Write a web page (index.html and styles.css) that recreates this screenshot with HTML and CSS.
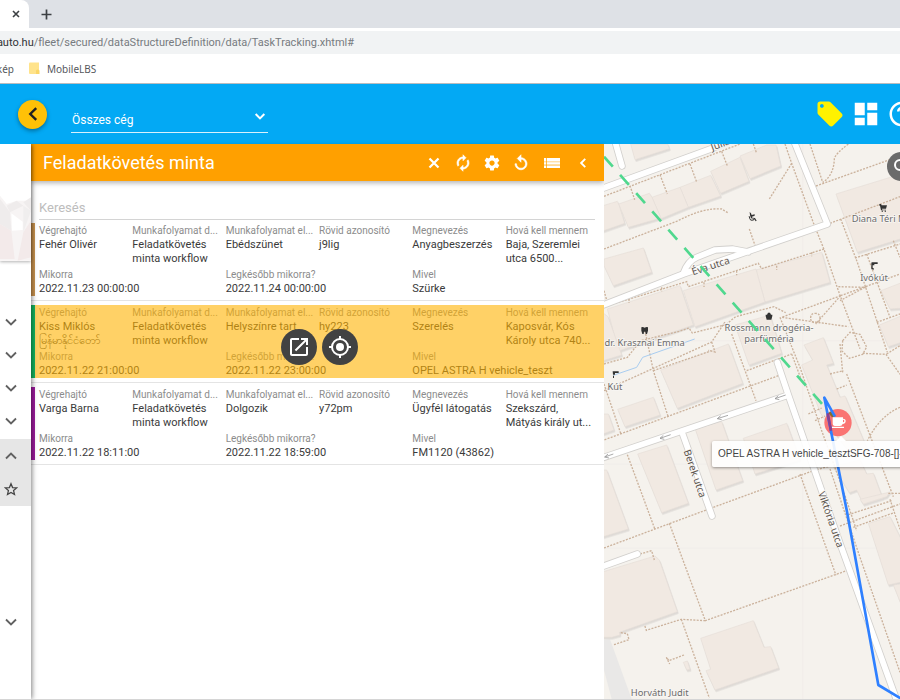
FILE: index.html
```html
<!DOCTYPE html>
<html lang="hu">
<head>
<meta charset="utf-8">
<title>Feladatkövetés minta</title>
<link rel="stylesheet" href="styles.css">
</head>
<body>
<div class="tabstrip">
  <div class="tab"><button class="tab-button" aria-label="Lap bezárása"><svg width="8" height="8" viewBox="0 0 8 8"><path d="M1 1l6 6M7 1L1 7" stroke="#3c4043" stroke-width="1.6"/></svg></button></div>
  <button class="tab-button new-tab" aria-label="Új lap"><svg width="11" height="11" viewBox="0 0 11 11"><path d="M5.5 0.5v10M0.500 5.500h10" stroke="#3c4043" stroke-width="1.7"/></svg></button>
</div>
<div class="address"><div class="url"><span class="host">auto.hu</span>/fleet/secured/dataStructureDefinition/data/TaskTracking.xhtml#</div></div>
<nav class="bookmarks">
  <a class="clipped" href="#">kép</a>
  <a class="bookmark" href="#"><svg width="11" height="13" viewBox="0 0 11 13"><path d="M1 .5h9v11.500H1q-1 0-1-1V1.500q0-1 1-1z" fill="#ffe38b"/><path d="M7 12V8.500q1.500-2 3.500 0V12z" fill="#fbd667"/></svg>MobileLBS</a>
</nav>

<header class="topbar">
  <button class="back" aria-label="Vissza"><svg width="22" height="22" viewBox="0 0 24 24"><path d="M15.500 5.500L9 12l6.500 6.500" fill="none" stroke="#222" stroke-width="2.600"/></svg></button>
  <div class="company">
    <select aria-label="Cég"><option>Összes cég</option></select>
    <svg class="caret" width="16" height="16" viewBox="0 0 24 24"><path d="M5.500 9L12 15.500 18.500 9" fill="none" stroke="#fff" stroke-width="3"/></svg>
  </div>
  <div class="top-actions">
    <button aria-label="Címkék"><svg width="30" height="30" viewBox="0 0 24 24"><path fill="#fff200" d="M21.410 11.580l-9-9C12.050 2.220 11.550 2 11 2H4c-1.100 0-2 .900-2 2v7c0 .550.220 1.050.590 1.420l9 9c.360.360.860.580 1.410.580s1.050-.220 1.410-.590l7-7c.370-.360.590-.860.590-1.410s-.230-1.060-.590-1.420zM5.500 7C4.670 7 4 6.330 4 5.500S4.670 4 5.500 4 7 4.670 7 5.500 6.330 7 5.500 7z"/></svg></button>
    <button aria-label="Irányítópult"><svg width="30" height="30" viewBox="0 0 24 24"><path fill="#fff" d="M3 13h8V3H3v10zm0 8h8v-6H3v6zm10 0h8V11h-8v10zm0-18v6h8V3h-8z"/></svg></button>
    <button aria-label="Súgó"><svg width="30" height="30" viewBox="0 0 24 24"><path fill="#fff" d="M11 18h2v-2h-2v2zm1-16C6.480 2 2 6.480 2 12s4.480 10 10 10 10-4.480 10-10S17.520 2 12 2zm0 18c-4.410 0-8-3.590-8-8s3.590-8 8-8 8 3.590 8 8-3.590 8-8 8zm0-14c-2.210 0-4 1.790-4 4h2c0-1.100.900-2 2-2s2 .900 2 2c0 2-3 1.750-3 5h2c0-2.250 3-2.500 3-5 0-2.210-1.790-4-4-4z"/></svg></button>
  </div>
</header>

<div class="workspace">
  <aside class="rail">
    <div class="cover"><svg width="31" height="117" viewBox="0 0 93 351"><path fill="#f7f4f4" d="M0 155l20 25 30-10h43v180H0z"/><path fill="#efecec" d="M0 165l30 40 4 55-34-20zM20 185l30-15 20 15-40 20zM70 175l23-15v40z"/><path fill="#f3eaea" d="M0 240l34 20 10 85H0zM70 265l23-35v110l-40 10z"/><path fill="#ffffff" d="M34 208l34 25v25l-32 2z"/><path fill="#f0eeee" d="M70 185l23 15-23 65z"/></svg></div>
    <div class="rail-list">
      <button aria-label="Kinyitás"><svg width="20" height="20" viewBox="0 0 24 24"><path class="chev" d="M6 9l6 6 6-6"/></svg></button>
      <button aria-label="Kinyitás"><svg width="20" height="20" viewBox="0 0 24 24"><path class="chev" d="M6 9l6 6 6-6"/></svg></button>
      <button aria-label="Kinyitás"><svg width="20" height="20" viewBox="0 0 24 24"><path class="chev" d="M6 9l6 6 6-6"/></svg></button>
      <button aria-label="Kinyitás"><svg width="20" height="20" viewBox="0 0 24 24"><path class="chev" d="M6 9l6 6 6-6"/></svg></button>
      <div class="rail-open">
        <button aria-label="Becsukás"><svg width="20" height="20" viewBox="0 0 24 24"><path class="chev" d="M6 15l6-6 6 6"/></svg></button>
        <button aria-label="Kedvenc"><svg width="14" height="14" viewBox="0 0 24 24"><path d="M12 3l2.700 6.500 7 .600-5.300 4.600 1.600 6.800-6-3.600-6 3.600 1.600-6.800L2.300 10.100l7-.600z" fill="none" stroke="#444" stroke-width="2.200"/></svg></button>
      </div>
      <div class="rail-gap"></div>
      <button aria-label="Kinyitás"><svg width="20" height="20" viewBox="0 0 24 24"><path class="chev" d="M6 9l6 6 6-6"/></svg></button>
    </div>
  </aside>

  <main class="panel">
    <div class="panel-head">
      <h1>Feladatkövetés minta</h1>
      <button aria-label="Bezárás"><svg width="18" height="18" viewBox="0 0 24 24"><path d="M6 6l12 12M18 6L6 18" stroke="#fff" stroke-width="3"/></svg></button>
      <button aria-label="Frissítés"><svg width="18" height="18" viewBox="0 0 24 24"><path fill="#fff" stroke="#fff" stroke-width=".8" d="M12 6v3l4-4-4-4v3c-4.420 0-8 3.580-8 8 0 1.570.460 3.030 1.240 4.260L6.700 14.800c-.450-.830-.700-1.790-.700-2.800 0-3.310 2.690-6 6-6zm6.760 1.740L17.300 9.200c.440.840.700 1.790.700 2.800 0 3.310-2.690 6-6 6v-3l-4 4 4 4v-3c4.420 0 8-3.580 8-8 0-1.570-.460-3.030-1.240-4.260z"/></svg></button>
      <button aria-label="Beállítások"><svg width="18" height="18" viewBox="0 0 24 24"><path fill="#fff" d="M19.430 12.980c.040-.320.070-.640.070-.980s-.030-.660-.070-.980l2.110-1.650c.190-.150.240-.420.120-.640l-2-3.460c-.120-.220-.390-.300-.610-.220l-2.490 1c-.520-.400-1.080-.730-1.690-.980l-.380-2.650C14.460 2.180 14.250 2 14 2h-4c-.250 0-.460.180-.490.420l-.380 2.650c-.610.250-1.170.590-1.690.980l-2.490-1c-.230-.090-.490 0-.610.220l-2 3.460c-.130.220-.070.490.120.640l2.110 1.650c-.040.320-.070.650-.070.980s.030.660.070.980l-2.110 1.650c-.190.150-.240.420-.120.640l2 3.460c.120.220.390.300.610.220l2.490-1c.520.400 1.080.730 1.690.980l.380 2.650c.030.240.240.420.490.420h4c.250 0 .460-.180.490-.420l.380-2.650c.610-.250 1.170-.590 1.690-.980l2.490 1c.230.090.490 0 .610-.220l2-3.460c.120-.220.070-.490-.120-.640l-2.110-1.650zM12 15.500c-1.930 0-3.500-1.570-3.500-3.500s1.570-3.500 3.500-3.500 3.500 1.570 3.500 3.500-1.570 3.500-3.500 3.500z"/></svg></button>
      <button aria-label="Visszaállítás"><svg width="18" height="18" viewBox="0 0 24 24"><path fill="#fff" stroke="#fff" stroke-width=".8" d="M12 5V1L7 6l5 5V7c3.310 0 6 2.690 6 6s-2.690 6-6 6-6-2.690-6-6H4c0 4.420 3.580 8 8 8s8-3.580 8-8-3.580-8-8-8z"/></svg></button>
      <button aria-label="Lista"><svg width="22" height="18" viewBox="0 0 22 18"><path fill="#fff" d="M3 4h16v3H3zM3 11.500h16V14H3z"/><path fill="#ffe0a8" d="M3 7h16v4.500H3z"/><path stroke="#fff" stroke-width="1.500" d="M3 9.200h16"/><path stroke="#ffa000" stroke-width=".7" d="M5.500 4v10"/></svg></button>
      <button aria-label="Összecsukás"><svg width="18" height="18" viewBox="0 0 24 24"><path d="M15 6.500L9.500 12l5.500 5.500" fill="none" stroke="#fff" stroke-width="2.500"/></svg></button>
    </div>
    <input class="search" type="text" placeholder="Keresés" aria-label="Keresés">

    <article class="task tan">
      <dl>
        <div><dt>Végrehajtó</dt><dd>Fehér Olivér</dd></div>
        <div><dt>Munkafolyamat d...</dt><dd>Feladatkövetés<br>minta workflow</dd></div>
        <div><dt>Munkafolyamat el...</dt><dd>Ebédszünet</dd></div>
        <div><dt>Rövid azonosító</dt><dd>j9lig</dd></div>
        <div><dt>Megnevezés</dt><dd>Anyagbeszerzés</dd></div>
        <div><dt>Hová kell mennem</dt><dd>Baja, Szeremlei<br>utca 6500...</dd></div>
        <div class="wide"><dt>Mikorra</dt><dd>2022.11.23 00:00:00</dd></div>
        <div class="wide"><dt>Legkésőbb mikorra?</dt><dd>2022.11.24 00:00:00</dd></div>
        <div class="wide"><dt>Mivel</dt><dd>Szürke</dd></div>
      </dl>
    </article>
    <article class="task green">
      <dl>
        <div><dt>Végrehajtó</dt><dd>Kiss Miklós<br>မြန်မာနိုင်ငံတော်</dd></div>
        <div><dt>Munkafolyamat d...</dt><dd>Feladatkövetés<br>minta workflow</dd></div>
        <div><dt>Munkafolyamat el...</dt><dd>Helyszínre tart</dd></div>
        <div><dt>Rövid azonosító</dt><dd>hy223</dd></div>
        <div><dt>Megnevezés</dt><dd>Szerelés</dd></div>
        <div><dt>Hová kell mennem</dt><dd>Kaposvár, Kós<br>Károly utca 740...</dd></div>
        <div class="wide"><dt>Mikorra</dt><dd>2022.11.22 21:00:00</dd></div>
        <div class="wide"><dt>Legkésőbb mikorra?</dt><dd>2022.11.22 23:00:00</dd></div>
        <div class="wide"><dt>Mivel</dt><dd>OPEL ASTRA H vehicle_teszt</dd></div>
      </dl>
      <div class="hover-actions">
        <button aria-label="Megnyitás"><svg width="24" height="24" viewBox="0 0 24 24"><path fill="#fff" d="M19 19H5V5h7V3H5c-1.110 0-2 .900-2 2v14c0 1.100.890 2 2 2h14c1.100 0 2-.900 2-2v-7h-2v7zM14 3v2h3.590l-9.830 9.830 1.410 1.410L19 6.410V10h2V3h-7z"/></svg></button>
        <button aria-label="Mutatás a térképen"><svg width="24" height="24" viewBox="0 0 24 24"><circle cx="12" cy="12" r="4" fill="#fff"/><circle cx="12" cy="12" r="8" fill="none" stroke="#fff" stroke-width="2"/><path d="M12 1v3M12 20v3M1 12h3M20 12h3" stroke="#fff" stroke-width="2"/></svg></button>
      </div>
    </article>
    <article class="task purple">
      <dl>
        <div><dt>Végrehajtó</dt><dd>Varga Barna</dd></div>
        <div><dt>Munkafolyamat d...</dt><dd>Feladatkövetés<br>minta workflow</dd></div>
        <div><dt>Munkafolyamat el...</dt><dd>Dolgozik</dd></div>
        <div><dt>Rövid azonosító</dt><dd>y72pm</dd></div>
        <div><dt>Megnevezés</dt><dd>Ügyfél látogatás</dd></div>
        <div><dt>Hová kell mennem</dt><dd>Szekszárd,<br>Mátyás király ut...</dd></div>
        <div class="wide"><dt>Mikorra</dt><dd>2022.11.22 18:11:00</dd></div>
        <div class="wide"><dt>Legkésőbb mikorra?</dt><dd>2022.11.22 18:59:00</dd></div>
        <div class="wide"><dt>Mivel</dt><dd>FM1120 (43862)</dd></div>
      </dl>
    </article>
  </main>

  <section class="map" aria-label="Térkép">
    <svg class="map-canvas" viewBox="12 0 888 1665" preserveAspectRatio="xMinYMin slice">
      <rect x="0" y="0" width="900" height="1670" fill="#f5f2ed"/>
      <path class="grid" d="M608 0V1670M12 468H0M12 590H900M12 960H900M12 1212H900"/>
      <path fill="#e9e8e7" d="M12 1488l18-2 65 179H35L12 1578z"/>
      <g class="buildings">
        <path d="M92 0l13 47 103-33-5-14z"/>
        <path d="M420 36l80-33h28l14 63-92 38z"/>
        <path d="M332 82l88-42 27 72-85 36z"/>
        <path d="M240 130l92-36 30 62-97 34z"/>
        <path d="M156 160l84-30 25 60-82 34z"/>
        <path d="M56 180l92-32 8 12 27 62-98 28z"/>
        <path d="M0 188l52-16 6 14 16 52-74 26z"/>
        <path d="M12 345l118-33 25 73-115 40-28-60z"/>
        <path d="M468 378l197-53 25 90-195 59z"/>
        <path d="M250 440l218-65 27 99-210 74z"/>
        <path d="M22 495l218-70 40 118-224 78z"/>
        <path d="M0 500l24 18 41 115-65 20z"/>
        <path d="M708 150l202-62v194l-138 43z"/>
        <path d="M843 440l67-26v78l-40 3z"/>
        <path d="M405 543l105-30 35 115-98 35z"/>
        <path d="M182 678l203-78 43 118-196 75z"/>
        <path d="M612 603l58-22 30 77-20 5 40 97 15-4 68 162-43 22-70-92-28-40-57-145 33-15z"/>
        <path d="M53 796l107-36 20 53-105 35z"/>
        <path d="M0 810l25 0 17 48-42 15z"/>
        <path d="M113 930l87-27 65 175-80 28z"/>
        <path d="M285 853l80-20 63 177-80 28z"/>
        <path d="M0 978l20 0 65 177-85 26z"/>
        <path d="M430 883l130-45 40 110-135 42z"/>
        <path d="M700 968l80-20 20 42 20-2 28 75-58 18-20-43-22 8z"/>
        <path d="M838 543l72-30v80l-45 15z"/>
        <path d="M0 1286l165-50 13 12 54 155-174 62 2 8-25 7-35 0z"/>
        <path d="M302 1483l158-53 32 80 20-2 24 64-191 66-27-58 14-4z"/>
        <path d="M780 1066l10 14 70-22 10-14z"/>
        <path d="M805 1138l65-20 40 80v115l-45 10z"/>
        <path d="M880 1323l30-5v80z"/>
        <path d="M250 1555l12-4 8 25-10 2z"/>
      </g>
      <g class="paths">
        <path d="M12 157L420 0M90 125l14 42M180 92l22 58M270 60l20 54M365 22l18 46M460 0l10 28"/>
        <path d="M12 315L230 232Q310 190 365 195L385 207"/>
        <path d="M555 0l20 58 65 178 32 80 48 138 60 160M575 58L508 165M630 0l38 115M745 0q-40 30-42 45-2 50-35 70"/>
        <path d="M648 126L900 36M690 238L900 158"/>
        <path d="M448 255l18 52M672 315L485 374l-10-16L265 428l-5-15L12 488M530 365v12M410 380v14M312 415v14M185 430v12M87 465v12M635 325v12"/>
        <path d="M722 225l50 130 60 180 30 90M765 342L900 300M880 290l20 50M800 330L870 520M722 455L900 390M722 455L545 520 745 548M715 428l80 2-75 40M722 455l-75 85M830 535L900 510"/>
        <path d="M12 440l8 28M632 522q0-14 14-14t14 14-14 14-14-14"/>
        <path d="M12 660l70-20 40-50 115-28 30-10 10 15 100-25 30-24 115-30 35 18M135 560l25 120 45 140M12 740L335 594l40-60M160 680l175-60M335 594l10 30-20-5M395 570l73 200M535 695L12 888M440 680l135-50M12 720l50 148"/>
        <path d="M540 520l60 150 65 190 65 180 40 120M575 630l30 80M625 810l40-18M645 830l30-14M690 690l40-10M710 735l30-12M720 600l8 85"/>
        <path d="M728 590l22-25 30 6 20 38-12 22-40 12-22-22zM788 628l70 3 42 60M860 630l40-25M740 690L880 1058M900 790q-60 25-98 100M865 1048h35"/>
        <path d="M82 932l82 222M12 1212L340 1090 640 980 690 966M208 1138l108 292L740 1280M316 1430l-72-4-105 33-5-15M244 1426l84 236M120 1230l35-10 8 28M600 990l108 304M690 975L780 1240 900 1585M720 1146L900 1080M745 1112l130-42M760 1150l125-45M870 1066l30 90M42 1502l45-15-5-18-20-3M252 1533l-45 17-8-10 10 20"/>
      </g>
      <path fill="none" stroke="#a9cdf0" stroke-width="3" d="M284 585L128 640l-18 30-70 24"/>
      <g class="casing">
        <path d="M0 136L340 12 365 0M45 -8l21 74M582 -8L682 240 445 322 250 390 0 487M250 388Q262 352 290 340L345 318 398 315 445 324"/>
        <path d="M0 944L565 753M532 655l33 98 155 445 168 465M248 870l88 246M0 1270l112-40"/>
      </g>
      <g class="roads">
        <path d="M0 136L340 12 365 0M45 -8l21 74M582 -8L682 240 445 322 250 390 0 487M250 388Q262 352 290 340L345 318 398 315 445 324"/>
        <path d="M0 944L565 753M532 655l33 98 155 445 168 465M248 870l88 246M0 1270l112-40"/>
      </g>
      <g fill="none" stroke="#999" stroke-width="2.500"><path d="M557 753l-32 11 10-9m-10 9l13 3M384 814l-32 10 10-9m-10 9l13 3M212 872l-32 11 10-9m-10 9l13 3M40 930l-26 9 10-9m-10 9l13 3"/></g>
      <g class="labels">
        <text transform="translate(337 20) rotate(-20)" class="start">Júlia utca</text>
        <text transform="translate(335 376) rotate(-18)">Éva utca</text>
        <text transform="translate(275 992) rotate(71)">Berek utca</text>
        <text transform="translate(683 1130) rotate(71)">Viktória utca</text>
        <g class="poi">
          <text x="755" y="234" class="start">Diana Téri Mini</text>
          <text x="822" y="411">Ivókút</text>
          <text x="507" y="560">Rossmann drogéria-</text>
          <text x="507" y="595">parfüméria</text>
          <text x="134" y="606">dr. Krasznai Emma</text>
          <text x="45" y="737">Kút</text>
          <text x="179" y="1655">Horváth Judit</text>
        </g>
      </g>
      <g fill="#333">
        <path d="M838 180h5l2 4h16l-3 10h-12l1 3h11v2h-15l-3-14h-2zM845 200h4v3h-4zM854 200h4v3h-4z"/>
        <path d="M815 355h18v5h-10v4h-5v12h-4v-18zM818 372h3v5h-3z"/>
        <path d="M497 512h4l3-6h6l3 6h4v4l-3 11h-14l-3-11z"/>
        <path d="M124 550q4-3 10 1 6-4 10-1v10l-3 10h-4l-1-7h-4l-1 7h-4l-3-10z"/>
        <path d="M38 682h18v5H45v5h-6zM39 695h3v7h-3z"/>
        <path d="M449 204l4 4 2 5 9-2v4l-8 3 1 3 8 1 5 8-3 2-5-8-9-1-3-9zM447 216l3 2q-1 8 6 9l6-2 1 3q-14 8-17-12z"/>
      </g>
      <path fill="none" stroke="#50d88e" stroke-width="8" stroke-dasharray="40 33" d="M12 38L666 780"/>
      <circle cx="714" cy="836" r="41" fill="#fb6262" fill-opacity=".88"/>
      <path fill="#8a6a2a" d="M684 806l14-4 6 16-8 2z"/>
      <path fill="none" stroke="#2f80ff" stroke-width="8" stroke-linejoin="round" d="M705 818L673 761l67 337 95 525 70 42"/>
      <path fill="none" stroke="#8a3f8f" stroke-width="8" d="M683 808l10 52"/>
      <path fill="#fff" d="M698 820h31v4q9 0 8 8-1 8-9 8-2 6-8 6h-15q-7 0-7-8zm31 7v8q4 0 4-4t-4-4zM696 848h36v4h-36z"/>
    </svg>
    <button class="map-search" aria-label="Keresés a térképen"><svg width="18" height="18" viewBox="0 0 18 18"><circle cx="7" cy="7" r="5" fill="none" stroke="#fff" stroke-width="2"/><path d="M11 11l6 6" stroke="#fff" stroke-width="2"/></svg></button>
    <div class="tooltip">OPEL ASTRA H vehicle_tesztSFG-708-[]-D</div>
  </section>
</div>
</body>
</html>
```
FILE: styles.css
```css
* { box-sizing: border-box; }
body {
  margin: 0;
  height: 100vh;
  display: flex;
  flex-direction: column;
  overflow: hidden;
  background: #fff;
  font-family: Roboto, "Noto Sans", sans-serif;
  color: #3a3a3a;
}
button {
  padding: 0;
  border: 0;
  background: none;
  display: flex;
  align-items: center;
  justify-content: center;
  flex: none;
  cursor: pointer;
}
svg { display: block; flex: none; }

/* browser chrome */
.tabstrip { display: flex; align-items: stretch; height: 28px; flex: none; background: #dee1e6; }
.tab {
  display: flex;
  justify-content: flex-end;
  width: 29px;
  padding-right: 9px;
  background: #fff;
  border-radius: 0 8px 0 0;
}
.new-tab { margin-left: 12px; }
.address {
  height: 23px;
  margin: 3px 0 0;
  flex: none;
  background: #f1f3f4;
  font: 11px/23px Roboto, sans-serif;
  color: #777b80;
}
.url { width: 354px; display: flex; justify-content: flex-end; white-space: nowrap; }
.host { color: #303236; }
.bookmarks {
  display: flex;
  align-items: center;
  gap: 15px;
  height: 30px;
  flex: none;
  border-bottom: 1px solid #b9bcbf;
  font: 10px "Noto Sans", sans-serif;
}
.bookmarks a { color: #55585c; text-decoration: none; }
.clipped { width: 14px; display: flex; justify-content: flex-end; }
.bookmark { display: flex; align-items: center; gap: 7px; }

/* application bar */
.topbar {
  display: flex;
  align-items: center;
  height: 60px;
  flex: none;
  padding-left: 18px;
  background: #03a9f4;
}
.back {
  width: 29px;
  height: 29px;
  border-radius: 50%;
  background: #ffc107;
  box-shadow: 0 2px 4px rgba(0, 0, 0, .35);
}
.company {
  display: flex;
  align-items: center;
  width: 197px;
  margin: 12px 0 0 22px;
  border-bottom: 1px solid #d9f1fd;
  margin-left: 24px;
}
.company select {
  flex: 1;
  height: 18px;
  padding: 0 1px;
  border: 0;
  appearance: none;
  background: none;
  color: #fff;
  font: 12px Roboto, sans-serif;
}
.caret { margin-left: -16px; margin-bottom: 8px; pointer-events: none; }
.top-actions { display: flex; gap: 6px; margin-left: auto; margin-right: -17px; }

/* workspace */
.workspace { display: flex; flex: 1; min-height: 0; border-bottom: 1px solid #d5d5d5; }
.rail {
  position: relative;
  z-index: 2;
  width: 31px;
  flex: none;
  background: #fff;
  box-shadow: 1px 0 5px rgba(0, 0, 0, .5);
  clip-path: inset(0 -8px 0 0);
}
.cover { box-shadow: 0 1px 3px rgba(0, 0, 0, .3); }
.rail-list { padding-top: 44px; }
.rail-list button { width: 22px; height: 33px; }
.rail-open { margin-top: 2px; padding-bottom: 1px; background: #e6e6e6; }
.rail-gap { height: 99px; }
.chev { fill: none; stroke: #616161; stroke-width: 2.2; }

.panel { flex: 573 1 0; min-width: 0; background: #fff; }
.panel-head {
  display: flex;
  align-items: center;
  gap: 11px;
  height: 37px;
  padding: 0 12px;
  background: #ffa000;
  box-shadow: 0 2px 5px rgba(0, 0, 0, .3);
}
.panel-head h1 { margin: 0 auto 0 0; font-size: 18px; font-weight: 400; color: #fff; }
.search {
  display: block;
  width: calc(100% - 17px);
  height: 24px;
  margin: 15px 9px 3px 8px;
  padding: 0;
  border: 0;
  border-bottom: 1px solid #d4d4d4;
  font: 13px Roboto, sans-serif;
}
.search::placeholder { color: #bdbdbd; }

.task { position: relative; padding-bottom: 4px; margin-bottom: 4px; border-bottom: 1px solid #e4e4e4; }
.task dl {
  display: grid;
  grid-template-columns: repeat(6, 1fr);
  align-content: start;
  height: 73px;
  margin: 0;
  padding: 0 5px 0 4px;
  border-left: 4px solid;
}
.tan dl { border-color: #c8924e; }
.green dl { border-color: #14b35f; }
.purple dl { border-color: #9c1b9c; }
.task dl div { min-width: 0; height: 44px; }
.task dl .wide { grid-column: span 2; height: 29px; }
.task dt {
  height: 15px;
  white-space: nowrap;
  font-size: 10px;
  line-height: 15px;
  color: #8c8c8c;
}
.task dd { margin: 0; font-size: 11px; line-height: 14px; white-space: nowrap; }
.hover-actions {
  position: absolute;
  inset: 0 0 4px 4px;
  display: flex;
  align-items: center;
  justify-content: center;
  gap: 5px;
  padding-top: 11px;
  background: rgba(255, 179, 0, .6);
}
.hover-actions button { width: 36px; height: 36px; border-radius: 50%; background: #424242; }

/* map */
.map { position: relative; flex: 296 1 0; min-width: 0; overflow: hidden; }
.map-canvas { width: 100%; height: 100%; }
.grid { stroke: #efece8; stroke-width: 2; fill: none; }
.buildings { fill: #f1e9e2; stroke: #e6ded8; stroke-width: 2; filter: drop-shadow(3px 5px 0 #dedad6); }
.paths { fill: none; stroke: #cbb29c; stroke-width: 4; stroke-dasharray: 6 4; }
.casing { fill: none; stroke: #d2d0cd; stroke-width: 22; stroke-linecap: round; stroke-linejoin: round; }
.roads { fill: none; stroke: #fff; stroke-width: 17; stroke-linecap: round; stroke-linejoin: round; }
.labels {
  font: 30px "Noto Sans", sans-serif;
  fill: #5c544e;
  text-anchor: middle;
  stroke: #f8f6f3;
  stroke-width: 5px;
  paint-order: stroke;
}
.poi { fill: #6b6b6b; font-size: 28px; }
.labels .start { text-anchor: start; }
.map-search {
  position: absolute;
  top: 8px;
  right: -16px;
  width: 29px;
  height: 29px;
  border-radius: 50%;
  background: #6b6b6b;
}
.tooltip {
  position: absolute;
  left: 108px;
  top: 297px;
  padding: 0 6px;
  border-radius: 2px;
  background: rgba(255, 255, 255, .9);
  box-shadow: 0 1px 3px rgba(0, 0, 0, .4);
  font: 10px/26px "Liberation Sans", sans-serif;
  white-space: nowrap;
  color: #444;
}
.tooltip::before {
  content: "";
  position: absolute;
  left: 124px;
  top: -5px;
  border: 5px solid transparent;
  border-top: 0;
  border-bottom-color: #fff;
}
```
